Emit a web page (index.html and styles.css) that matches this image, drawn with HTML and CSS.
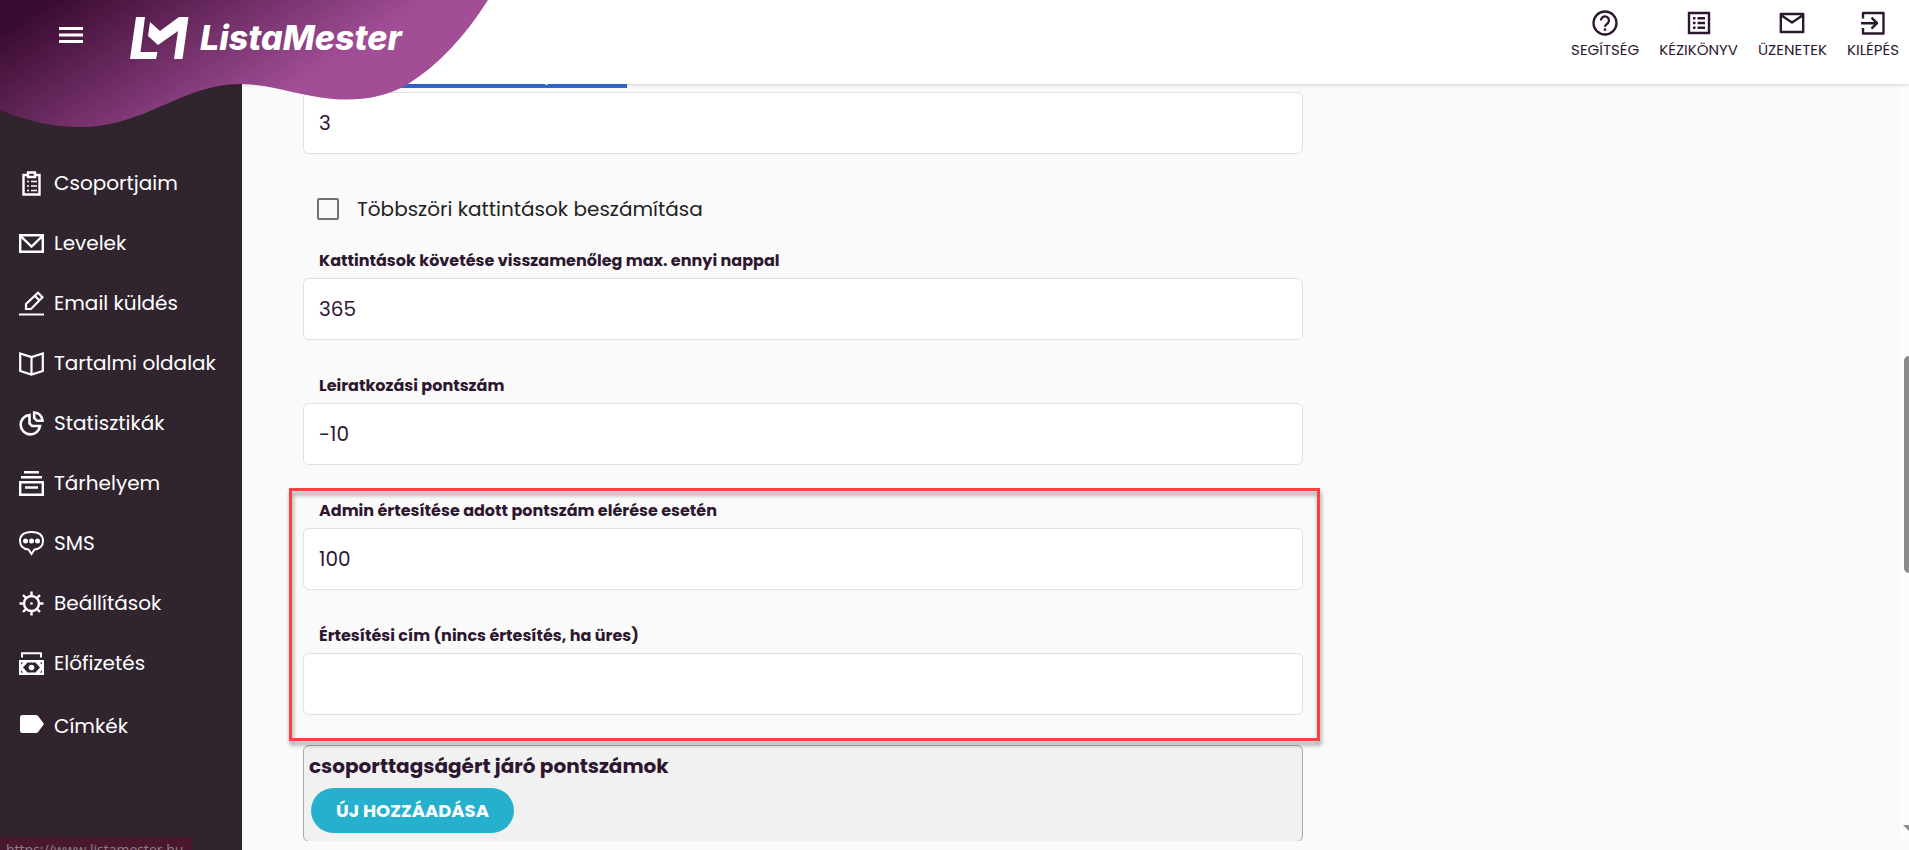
FILE: index.html
```html
<!DOCTYPE html>
<html lang="hu">
<head>
<meta charset="utf-8">
<title>ListaMester</title>
<link rel="stylesheet" href="styles.css">
</head>
<body>
<header class="topbar">
  <svg class="wave" width="490" height="130" viewBox="0 0 490 130" aria-hidden="true">
    <defs><linearGradient id="wave-fill" gradientUnits="userSpaceOnUse" x1="50" y1="0" x2="162" y2="175"><stop offset="0" stop-color="#390b30"/><stop offset="1" stop-color="#a24e97"/></linearGradient></defs>
    <path fill="url(#wave-fill)" d="M0 0H488C464 38 437 66 408 84C385 98 358 101 333 99C298 96 272 84 240 84C184 84 150 123 88 127C57 128 29 122 0 110Z"/>
  </svg>
  <div class="brand">
    <button class="menu-button" type="button" aria-label="Menü">
      <svg width="24" height="16" viewBox="0 0 24 16"><path fill="#fff" d="M0 0h24v3H0zM0 6.500h24v3H0zM0 13h24v3H0z"/></svg>
    </button>
    <a class="logo" href="#">
      <svg width="59" height="42" viewBox="0 0 59 42" aria-hidden="true"><path fill="#fff" d="M6 0h9L10.500 35H27.500L26 42H0ZM20 5L30 14L49 0H58.500L52.500 42H44L48 14L28 28L18 19Z"/></svg>
      <span class="logo-text">ListaMester</span>
    </a>
  </div>
  <nav class="top-links">
    <a href="#"><svg width="26" height="26" viewBox="0 0 26 26" fill="none" stroke="#2d1730" stroke-width="2.300"><circle cx="13" cy="13" r="11.500"/><path d="M9 10.500a4 4 0 1 1 6.500 3c-1.500 1.200-2.500 1.800-2.500 3.300"/><path d="M13 18.300v2.500"/></svg>SEGÍTSÉG</a>
    <a href="#"><svg width="26" height="26" viewBox="0 0 26 26" fill="none" stroke="#2d1730" stroke-width="2.400"><path d="M3 3h20v20H3zM7 8.200h2.500M11.500 8.200H19M7 13h2.500M11.500 13H19M7 17.800h2.500M11.500 17.800H19"/></svg>KÉZIKÖNYV</a>
    <a href="#"><svg width="26" height="26" viewBox="0 0 26 26" fill="none" stroke="#2d1730" stroke-width="2.400" stroke-linejoin="round"><path d="M1.800 4h22.400v18H1.800zM2.500 5.500L13 12.500L23.500 5.500"/></svg>ÜZENETEK</a>
    <a href="#"><svg width="26" height="26" viewBox="0 0 26 26" fill="none" stroke="#2d1730" stroke-width="2.400" stroke-linejoin="round"><path d="M3 8.500V3h20.500v20.500H3V18M1 13.200h15.500M11.500 7.700L17 13.200L11.500 18.700"/></svg>KILÉPÉS</a>
  </nav>
</header>
<div class="layout">
  <nav class="sidebar">
    <a href="#"><svg viewBox="0 0 25 25" stroke-width="2.400"><path d="M4.500 4h16v19.500h-16z"/><path d="M9 1.500h7v4.500H9z" fill="#30252e"/><path stroke-width="1.500" d="M8 10.500h2M12 10.500h6M8 15h2M12 15h6M8 19.500h2M12 19.500h6"/></svg>Csoportjaim</a>
    <a href="#"><svg viewBox="0 0 25 25" stroke-width="2.400"><path d="M1.200 4.200h22.600v16.600H1.200zM1.500 5L12.500 15.500L23.500 5"/></svg>Levelek</a>
    <a href="#"><svg viewBox="0 0 25 25" stroke-width="2.200"><path d="M0 23.500h25M7 18v-5L19 1.800L23.500 6.300L12 18ZM16 5l4 4"/></svg>Email küldés</a>
    <a href="#"><svg viewBox="0 0 25 25" stroke-width="2.200"><path d="M1.200 2.500L12.500 6L23.800 2.500V20L12.500 23.500L1.200 20ZM12.500 6v17"/></svg>Tartalmi oldalak</a>
    <a href="#"><svg viewBox="0 0 25 25" stroke-width="2.600"><path d="M10.500 4a9.700 9.700 0 1 0 10.500 11H13L10.500 12.500ZM15.200 1.500c4.500 0 8 3.500 8.300 8.300H18L15.200 7Z"/></svg>Statisztikák</a>
    <a href="#"><svg viewBox="0 0 25 25" stroke-width="2.400"><path d="M5 1.200h15M2 6.200h21M1.200 11.200h22.600v12.600H1.200zM6 16.500h13"/></svg>Tárhelyem</a>
    <a href="#"><svg viewBox="0 0 25 25" stroke-width="2"><path d="M12.500 23L9.500 18.500C4 18 1 14.500 1 10C1 4.500 5 1 12.500 1S24 4.500 24 10C24 14.500 21 18 15.500 18.500Z"/><g fill="#fff" stroke="none"><circle cx="6.500" cy="10" r="2.500"/><circle cx="12.500" cy="10" r="2.500"/><circle cx="18.500" cy="10" r="2.500"/></g></svg>SMS</a>
    <a href="#"><svg viewBox="0 0 25 25" stroke-width="2.400"><circle cx="12.500" cy="12.500" r="7.500"/><path d="M12.500 0.500v5M12.500 19.500v5M0.500 12.500h5M19.500 12.500h5M4 4l3.500 3.500M17.500 17.500L21 21M4 21l3.500-3.500M17.500 7.500L21 4"/><circle cx="12.500" cy="12.500" r="1.300" fill="#fff" stroke="none"/></svg>Beállítások</a>
    <a href="#"><svg viewBox="0 0 25 25" stroke-width="2"><path d="M3 6.500V2.200h19v4.300"/><path fill="#fff" stroke="none" d="M0 9h25v15H0z"/><path fill="#30252e" stroke="none" d="M4 16.500L8.500 11.500H16.500L21 16.500L16.500 21.500H8.500ZM2 11.500h2.200L2 13.500ZM20.800 11.500H23v2ZM2 19.500l2.200 2H2ZM23 19.500v2h-2.200Z"/><circle cx="12.500" cy="16.500" r="2.800" fill="#fff" stroke="none"/></svg>Előfizetés</a>
    <a class="tags" href="#"><svg viewBox="0 0 25 25"><path fill="#fff" stroke="none" d="M3.500 1H17Q18.500 1 19.500 2.500L25 10L19.500 17.500Q18.500 19 17 19H3.500Q1 19 1 16.500V3.500Q1 1 3.500 1Z"/></svg>Címkék</a>
  </nav>
  <main class="content">
    <div class="active-tab"></div>
    <form class="form">
      <input class="text-input" type="text" value="3" aria-label="Pontszám">
      <label class="check-row"><input type="checkbox">Többszöri kattintások beszámítása</label>
      <div class="field"><label for="days">Kattintások követése visszamenőleg max. ennyi nappal</label><input class="text-input" id="days" type="text" value="365"></div>
      <div class="field"><label for="unsub">Leiratkozási pontszám</label><input class="text-input" id="unsub" type="text" value="-10"></div>
      <div class="notify-group">
        <div class="field"><label for="limit">Admin értesítése adott pontszám elérése esetén</label><input class="text-input" id="limit" type="text" value="100"></div>
        <div class="field"><label for="address">Értesítési cím (nincs értesítés, ha üres)</label><input class="text-input" id="address" type="text"></div>
        <div class="highlight"></div>
      </div>
      <section class="points-panel">
        <h2>csoporttagságért járó pontszámok</h2>
        <button class="add-button" type="button">ÚJ HOZZÁADÁSA</button>
      </section>
    </form>
  </main>
</div>
<div class="status-link">https://www.listamester.hu</div>
<div class="scroll-track"><div class="scroll-thumb"></div><div class="scroll-arrow"></div></div>
</body>
</html>
```
FILE: styles.css
```css
* { box-sizing: border-box; }
body {
  margin: 0;
  height: 100vh;
  overflow: hidden;
  display: flex;
  flex-direction: column;
  position: relative;
  background: #fafafa;
  color: #2d1730;
  font-family: Poppins, Inter, sans-serif;
  font-size: 20px;
}
a { color: inherit; text-decoration: none; }
button, input { font: inherit; color: inherit; }

.topbar {
  position: relative;
  z-index: 2;
  flex: none;
  height: 84px;
  display: flex;
  justify-content: space-between;
  align-items: flex-start;
  background: #fff;
  box-shadow: 0 1px 4px rgba(0, 0, 0, 0.16);
}
.wave { position: absolute; left: 0; top: 0; }
.brand {
  position: relative;
  display: flex;
  align-items: center;
  gap: 47px;
  padding: 17px 0 0 59px;
}
.menu-button {
  display: flex;
  padding: 0 0 6px;
  border: 0;
  background: none;
}
.logo { display: flex; align-items: center; gap: 11px; color: #fff; }
.logo-text {
  font: italic 800 34px/42px Inter, sans-serif;
}
.top-links {
  display: flex;
  gap: 20px;
  padding: 10px 10px 0 0;
  font-size: 15px;
}
.top-links a {
  display: flex;
  flex-direction: column;
  align-items: center;
  gap: 4px;
  line-height: 20px;
}

.layout { flex: 1; min-height: 0; display: flex; }
.sidebar {
  flex: none;
  width: 242px;
  padding: 69px 0 0 19px;
  background: #30252e;
  color: #fff;
}
.sidebar a {
  display: flex;
  align-items: center;
  gap: 10px;
  height: 60px;
}
.sidebar svg {
  width: 25px;
  height: 25px;
  fill: none;
  stroke: #fff;
}
.sidebar .tags { margin-top: 3px; }

.content {
  flex: 1;
  min-width: 0;
  margin-bottom: 9px;
  padding: 0 61px;
  overflow: hidden;
}
.active-tab {
  position: relative;
  width: 324px;
  height: 4px;
  margin-bottom: 4px;
  background: #3468d2;
}
.active-tab::after {
  content: "";
  position: absolute;
  left: 242px;
  top: 0;
  width: 3px;
  height: 1px;
  background: #dfe7f7;
}
.form { max-width: 1000px; }
.text-input {
  display: block;
  width: 100%;
  height: 62px;
  padding: 0 15px;
  border: 1px solid #e0e0e0;
  border-radius: 6px;
  background: #fff;
}
.check-row {
  display: flex;
  align-items: center;
  gap: 18px;
  height: 30px;
  margin: 40px 0 25px 14px;
  color: #222;
}
.check-row input {
  appearance: none;
  width: 22px;
  height: 22px;
  margin: 0;
  border: 2px solid #727272;
  border-radius: 2px;
  background: #fafafa;
}
.field { margin-bottom: 34px; }
.field label {
  display: block;
  padding: 0 16px 5px;
  font-size: 16px;
  line-height: 24px;
  font-weight: 700;
}
.notify-group { position: relative; margin-bottom: 30px; }
.notify-group .field:nth-child(2) { margin-bottom: 0; }
.highlight {
  position: absolute;
  inset: -11px -17px -26px -14px;
  border: 3px solid #ff4040;
  filter: drop-shadow(1px 4px 2px rgba(0, 0, 0, 0.4));
  pointer-events: none;
}
.points-panel {
  height: 97px;
  padding: 5px;
  border: 1px solid #aaa;
  border-radius: 6px;
  background: #f1f1f1;
}
.points-panel h2 {
  margin: 0 0 7px;
  font-size: 20px;
  line-height: 30px;
}
.add-button {
  height: 45px;
  margin-left: 2px;
  padding: 0 25px;
  border: 0;
  border-radius: 23px;
  background: #25b1cd;
  color: #fff;
  font-size: 18px;
  font-weight: 700;
}

.status-link {
  position: absolute;
  left: 0;
  bottom: 0;
  width: 192px;
  height: 13px;
  padding: 4px 6px 0;
  overflow: hidden;
  border-top-right-radius: 4px;
  background: #4a182e;
  color: #8b8389;
  font: 14px/18px "Open Sans", sans-serif;
}
.scroll-track {
  position: absolute;
  top: 85px;
  right: 0;
  bottom: 9px;
  width: 9px;
  overflow: hidden;
  background: #fcfcfc;
}
.scroll-thumb {
  height: 217px;
  margin: 271px 0 0 4px;
  border-radius: 5px 0 0 5px;
  background: #8b8b8b;
}
.scroll-arrow {
  position: absolute;
  left: 3px;
  bottom: 9px;
  border: 7px solid transparent;
  border-top-color: #8b8b8b;
  border-bottom: 0;
}
```
